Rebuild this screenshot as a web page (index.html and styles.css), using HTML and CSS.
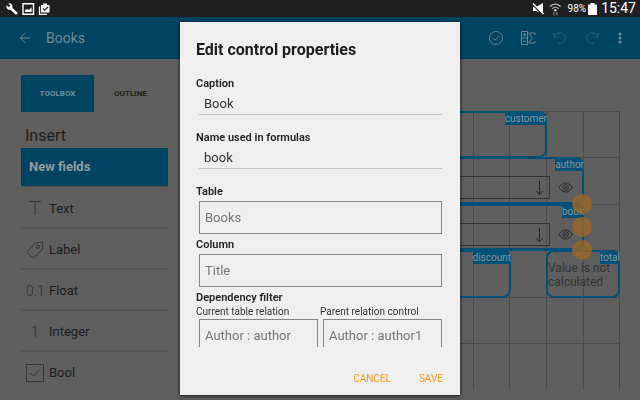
FILE: index.html
```html
<!DOCTYPE html>
<html lang="en">
<head>
<meta charset="utf-8">
<title>Books</title>
<link rel="stylesheet" href="styles.css">
</head>
<body>
<div class="status">
  <svg class="status-left" width="44" height="12" viewBox="0 0 44 12" fill="none">
    <path d="M4.500 5 11 11" stroke="#fff" stroke-width="2.600"/>
    <path d="M.6 2.200 2.600 4.200 4.300 2.600 2.300.5C4.500-.2 7 1.600 6.500 4.200 6 6.700 3.500 7.300 1.800 6.200.4 5.300 0 3.600.6 2.200Z" fill="#fff"/>
    <path d="M17 .8h10.500v10.500H17Z" stroke="#fff" stroke-width="1.400"/>
    <path d="M19 9V7l2-1 2 1 2.600-2.800V9Z" fill="#fff"/>
    <path d="M35 2h2V.5h4V2h2.500v7.500H35Z" fill="#fff"/>
    <path d="M33.500 3.500v7.800H41" stroke="#fff" stroke-width="1.300"/>
    <path d="m37 5.500 1.700 1.700L42 4" stroke="#222" stroke-width="1.200"/>
  </svg>
  <div class="status-right">
    <svg width="30" height="14" viewBox="0 0 30 14" fill="none">
      <path d="M1 5h3l7-4v11L4 9H1Z" fill="#fff"/>
      <path d="M0 1 11 13" stroke="#1f1f1f" stroke-width="2.500"/>
      <path d="M1 1.500 11.500 12" stroke="#fff" stroke-width="1.400"/>
      <path d="M18 4.500c3-3.300 7.600-3.300 10.600 0M20 6.800c2-2 4.700-2 6.700 0" stroke="#bbb" stroke-width="1.300"/>
      <path d="m21.700 8 1.600 1.600L25 8c-1-1-2.300-1-3.300 0Z" fill="#fff"/>
      <path d="M22 10v3.500M25 10v3.500" stroke="#999"/>
    </svg>
    <span class="percent">98%</span>
    <svg width="9" height="12" viewBox="0 0 9 12"><path d="M2.500 0h4v1.500H9V12H0V1.500h2.500Z" fill="#fff"/></svg>
    <span class="clock">15:47</span>
  </div>
</div>
<header class="bar">
  <button class="icon-btn" aria-label="Back"><svg width="12" height="12" viewBox="0 0 12 12"><path d="M11 6H1.500M6.200 1 1.200 6l5 5"/></svg></button>
  <h1>Books</h1>
  <div class="actions">
    <button class="icon-btn" aria-label="Validate"><svg width="16" height="16" viewBox="0 0 16 16"><circle cx="8" cy="8" r="6.500"/><path d="m5 8 2.200 2.200L11.300 6"/></svg></button>
    <button class="icon-btn" aria-label="Formulas"><svg width="16" height="16" viewBox="0 0 16 16"><path d="M1.500 1.500h6v13h-6ZM1.500 8h6M4.500 3v3.500M2.800 4.800h3.500M3 11.300h3M15 5V3H8.700l3.600 5-3.600 5H15v-2"/></svg></button>
    <button class="icon-btn dim" aria-label="Undo"><svg width="16" height="16" viewBox="0 0 16 16"><path d="M2 3v4h4M2.300 6.800C4 3 8 2 11 4c3.200 2.300 3 7-.5 9-1.500.8-3 .8-4.500.2"/></svg></button>
    <button class="icon-btn dim" aria-label="Redo"><svg width="16" height="16" viewBox="0 0 16 16"><path d="M14 3v4h-4M13.700 6.800C12 3 8 2 5 4c-3.200 2.300-3 7 .5 9 1.500.8 3 .8 4.500.2"/></svg></button>
    <button class="icon-btn more" aria-label="More"><svg width="4" height="12" viewBox="0 0 4 12"><circle cx="2" cy="2" r="1.500"/><circle cx="2" cy="6" r="1.500"/><circle cx="2" cy="10" r="1.500"/></svg></button>
  </div>
</header>
<main class="workspace">
  <aside class="toolbox">
    <nav class="tabs"><button class="tab active">TOOLBOX</button><button class="tab">OUTLINE</button></nav>
    <h2>Insert</h2>
    <h3>New fields</h3>
    <ul class="fields">
      <li><svg width="18" height="18" viewBox="0 0 18 18"><path d="M3 2.500h12M9 2.500V16"/></svg>Text</li>
      <li><svg width="18" height="18" viewBox="0 0 18 18"><path d="M.7 11.500 9 2.300 17 1l-.6 7.300L7.500 17Z"/><circle cx="12" cy="5.700" r="1.700"/></svg>Label</li>
      <li><span class="glyph">0.1</span>Float</li>
      <li><span class="glyph">1</span>Integer</li>
      <li><svg width="18" height="18" viewBox="0 0 18 18"><path d="M.5.5h17v17H.5ZM4.500 9l3 3.300L13.500 6"/></svg>Bool</li>
    </ul>
  </aside>
  <section class="canvas">
    <svg class="grid" width="440" height="279" viewBox="0 0 440 279">
      <path d="M.5.5h439M.5 46.500h439M.5 93.500h439M.5 139.500h439M.5 186.500h439M.5 232.500h439"/>
      <path d="M329.500 0v279M366.500 0v279M439.500 0v279M403.500 0v279M293.500 0v279"/>
    </svg>
    <div class="node customer"><span class="tag">customer</span></div>
    <div class="node author"><span class="tag">author</span>
      <span class="combo"><svg width="9" height="16" viewBox="0 0 9 16"><path d="M4.500 1v13.500M1 11l3.500 3.500L8 11"/></svg></span>
      <svg class="eye" width="15" height="11" viewBox="0 0 15 11"><path d="M.8 5.500c4-6 9.400-6 13.400 0-4 6-9.400 6-13.400 0Z"/><circle cx="7.500" cy="5.500" r="2.800"/><circle cx="7.500" cy="5.500" r=".8"/></svg>
    </div>
    <div class="node book"><span class="tag">book</span>
      <span class="combo"><svg width="9" height="16" viewBox="0 0 9 16"><path d="M4.500 1v13.500M1 11l3.500 3.500L8 11"/></svg></span>
      <svg class="eye" width="15" height="11" viewBox="0 0 15 11"><path d="M.8 5.500c4-6 9.400-6 13.400 0-4 6-9.400 6-13.400 0Z"/><circle cx="7.500" cy="5.500" r="2.800"/><circle cx="7.500" cy="5.500" r=".8"/></svg>
    </div>
    <div class="node discount"><span class="tag">discount</span></div>
    <div class="node total"><span class="tag">total</span><p>Value is not calculated</p></div>
    <i class="handle h1"></i><i class="handle h2"></i><i class="handle h3"></i>
  </section>
</main>
<div class="overlay">
  <form class="dialog" role="dialog" aria-labelledby="dialog-title">
    <h2 id="dialog-title">Edit control properties</h2>
    <div class="scroll">
      <div class="line-field"><label for="caption">Caption</label><input id="caption" type="text" value="Book"></div>
      <div class="line-field"><label for="name">Name used in formulas</label><input id="name" type="text" value="book"></div>
      <div class="box-field"><label for="table">Table</label><select id="table"><option>Books</option></select></div>
      <div class="box-field"><label for="column">Column</label><select id="column"><option>Title</option></select></div>
      <h3>Dependency filter</h3>
      <div class="pair">
        <div class="box-field small"><label for="current">Current table relation</label><select id="current"><option>Author : author</option></select></div>
        <div class="box-field small"><label for="parent">Parent relation control</label><select id="parent"><option>Author : author1</option></select></div>
      </div>
    </div>
    <footer><button type="button">CANCEL</button><button type="button">SAVE</button></footer>
  </form>
</div>
</body>
</html>
```
FILE: styles.css
```css
* { box-sizing: border-box; }
body {
  margin: 0;
  min-height: 100vh;
  display: flex;
  flex-direction: column;
  background: #5f5f5f;
  color: #1d1d1d;
  font-family: Roboto, "Liberation Sans", sans-serif;
  font-size: 13px;
}
h1, h2, h3, p, ul { margin: 0; padding: 0; }
button, input, select { font: inherit; border: 0; border-radius: 0; padding: 0; margin: 0; background: none; color: inherit; }
svg { display: block; fill: none; flex: none; }

.status {
  display: flex;
  justify-content: space-between;
  align-items: center;
  height: 17px;
  padding: 0 4px 0 6px;
  background: #1f1f1f;
  color: #fff;
}
.status-left { overflow: visible; }
.status-right { display: flex; align-items: center; }
.percent { margin: 0 2px 0 6px; font-size: 10px; }
.clock { margin-left: 4px; font-size: 14px; line-height: 17px; }

.bar {
  display: flex;
  align-items: center;
  height: 42px;
  padding: 0 18px 0 19px;
  background: #004462;
  color: #718c99;
}
.bar h1 { margin-left: 15px; font-size: 14px; font-weight: 400; }
.icon-btn { display: block; }
.icon-btn svg { stroke: #6b8794; stroke-width: 1; }
.dim svg { stroke: #2b6079; }
.more { margin-left: 2px; }
.more svg { fill: #718c99; stroke: none; }
.actions { display: flex; align-items: center; gap: 16px; margin-left: auto; }

.workspace { display: flex; flex: 1; }
.toolbox { flex: none; width: 180px; padding: 16px 12px 0 21px; }
.tabs { display: flex; }
.tab { width: 73px; height: 37px; font-size: 8px; font-weight: 700; }
.tab.active { background: #004462; color: #718c99; }
.toolbox h2 { margin: 12px 0 0 4px; font-size: 16px; font-weight: 400; line-height: 24px; }
.toolbox h3 {
  padding-left: 8px;
  background: #004462;
  color: #939da2;
  font-size: 13px;
  font-weight: 700;
  line-height: 38px;
}
.fields { list-style: none; }
.fields li {
  display: flex;
  align-items: center;
  gap: 5px;
  height: 41px;
  padding: 2px 0 0 5px;
  border-bottom: 2px solid #555;
}
.fields li:first-child { height: 43px; border-top: 1px solid #555; }
.fields li:last-child { height: 39px; border: 0; }
.fields svg { stroke: #363636; }
.glyph { width: 18px; color: #363636; font-size: 14px; font-weight: 300; text-align: center; white-space: nowrap; }

.canvas { position: relative; flex: 1; height: 279px; margin: 52px 20px 0 0; }
.grid { position: absolute; top: 0; right: 0; stroke: #4b4b4b; }
.node { position: absolute; left: 0; border: 2px solid #005179; border-radius: 8px; }
.tag {
  position: absolute;
  top: -1px;
  right: -2px;
  border-top-right-radius: 6px;
  background: #005179;
  color: #8b969c;
  font-size: 10px;
  line-height: 13px;
}
.customer { top: 0; right: 73px; height: 47px; }
.author { top: 46px; right: 36px; height: 47px; }
.book { top: 92px; right: 36px; height: 48px; border-width: 3px 2px; }
.discount { top: 139px; right: 109px; height: 48px; }
.total { top: 139px; left: auto; right: 0; width: 74px; height: 48px; }
.total p { padding-top: 9px; color: #343434; font-size: 12px; line-height: 14px; }
.combo {
  position: absolute;
  top: 17px;
  right: 32px;
  width: 200px;
  height: 23px;
  padding: 3px 5px;
  border: 1px solid #333;
}
.combo svg { margin-left: auto; stroke: #252525; }
.eye { position: absolute; top: 23px; right: 9px; stroke: #292929; }
.handle { position: absolute; right: 28px; width: 20px; height: 20px; border-radius: 50%; background: rgb(155 104 37 / 80%); }
.h1 { top: 83px; }
.h2 { top: 106px; }
.h3 { top: 129px; }

.overlay { position: fixed; inset: 22px 0 5px; display: flex; justify-content: center; }
.dialog {
  display: flex;
  flex-direction: column;
  width: 280px;
  padding: 16px 16px 0;
  background: #efefef;
  box-shadow: 0 1px 4px rgb(0 0 0 / 80%);
}
.dialog h2 { font-size: 16px; font-weight: 700; line-height: 24px; }
.scroll { flex: none; height: 285px; padding: 14px 0 0; overflow: hidden; }
.dialog label, .dialog h3 { display: block; color: #222; font-size: 11px; font-weight: 600; line-height: 16px; }
.line-field { margin-bottom: 15px; }
.line-field input {
  display: block;
  width: calc(100% - 5px);
  height: 23px;
  margin-left: 3px;
  padding: 0 5px;
  border-bottom: 1px solid #c4c4c4;
  color: #333;
}
.line-field input, .dialog select { font-size: 13px; }
.box-field { margin-bottom: 3px; }
.dialog select {
  display: block;
  appearance: none;
  width: calc(100% - 5px);
  height: 33px;
  margin: 1px 0 0 3px;
  padding: 0 5px;
  border: 1px solid #858585;
  color: #757575;
}
.pair { display: grid; grid-template-columns: 1fr 1fr; }
.dialog .small label { font-size: 10px; font-weight: 400; line-height: 12px; color: #333; }
.dialog footer { display: flex; justify-content: flex-end; gap: 28px; padding: 22px 1px 0 0; }
.dialog footer button { color: #f79a1c; font-size: 10px; line-height: 20px; }
```
